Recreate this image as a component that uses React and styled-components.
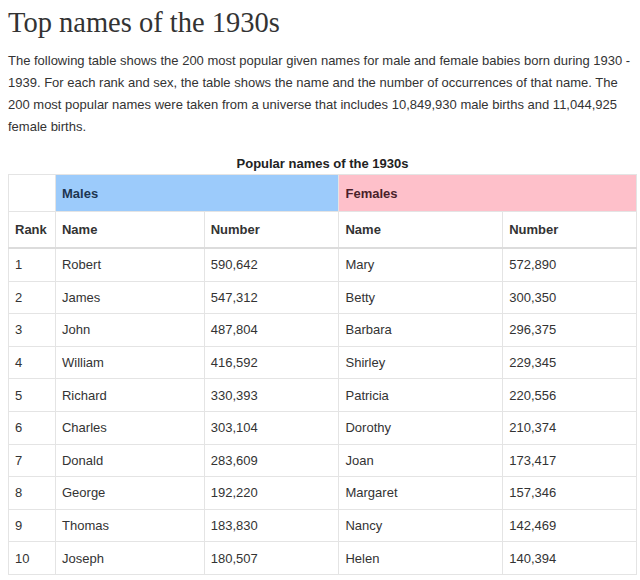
import React from 'react';
import styled, { createGlobalStyle } from 'styled-components';

const GlobalStyle = createGlobalStyle`
  body {
    margin: 0;
    padding: 0 8px;
    background: #fff;
    color: #333;
    font-family: "Liberation Sans", Arial, sans-serif;
  }
`;

const Page = styled.div`
  width: 632px;
`;

const Title = styled.h1`
  margin: 0;
  padding-top: 6px;
  font-family: "Liberation Serif", "Times New Roman", serif;
  font-weight: normal;
  font-size: 28.5px;
  line-height: 34px;
  color: #333;
`;

const Intro = styled.p`
  margin: 10px 0 0;
  font-size: 13px;
  line-height: 22px;
  color: #333;
`;

const Table = styled.table`
  margin-top: 16px;
  width: 629px;
  border-collapse: collapse;
  font-size: 13px;
  color: #333;
`;

const Caption = styled.caption`
  font-weight: bold;
  font-size: 13px;
  line-height: 20px;
  padding-bottom: 0;
  color: #222;
`;

const GroupCell = styled.th`
  height: 36px;
  padding: 0 6px;
  text-align: left;
  font-weight: bold;
  border: 1px solid #e4e4e4;
  background: ${p => (p.$tone === 'male' ? '#9ccbfb' : p.$tone === 'female' ? '#fec0ca' : '#fff')};
  color: ${p => (p.$tone === 'male' ? '#1c3550' : '#4a1f2a')};
`;

const HeadCell = styled.th`
  height: 35px;
  padding: 0 6px;
  text-align: left;
  font-weight: bold;
  border: 1px solid #e4e4e4;
  border-bottom: 2px solid #dcdcdc;
  color: #333;
`;

const Cell = styled.td`
  height: 31.6px;
  padding: 0 6px;
  border: 1px solid #e4e4e4;
  color: #333;
`;

const rows = [
  ['Robert', '590,642', 'Mary', '572,890'],
  ['James', '547,312', 'Betty', '300,350'],
  ['John', '487,804', 'Barbara', '296,375'],
  ['William', '416,592', 'Shirley', '229,345'],
  ['Richard', '330,393', 'Patricia', '220,556'],
  ['Charles', '303,104', 'Dorothy', '210,374'],
  ['Donald', '283,609', 'Joan', '173,417'],
  ['George', '192,220', 'Margaret', '157,346'],
  ['Thomas', '183,830', 'Nancy', '142,469'],
  ['Joseph', '180,507', 'Helen', '140,394'],
];

export default function App() {
  return (
    <Page>
      <GlobalStyle />
      <Title>Top names of the 1930s</Title>
      <Intro>
        The following table shows the 200 most popular given names for male and female babies born during 1930 -
        1939. For each rank and sex, the table shows the name and the number of occurrences of that name. The
        200 most popular names were taken from a universe that includes 10,849,930 male births and 11,044,925
        female births.
      </Intro>
      <Table>
        <Caption>Popular names of the 1930s</Caption>
        <colgroup>
          <col style={{ width: 47 }} />
          <col style={{ width: 149 }} />
          <col style={{ width: 135 }} />
          <col style={{ width: 164 }} />
          <col style={{ width: 134 }} />
        </colgroup>
        <thead>
          <tr>
            <GroupCell />
            <GroupCell colSpan={2} $tone="male">Males</GroupCell>
            <GroupCell colSpan={2} $tone="female">Females</GroupCell>
          </tr>
          <tr>
            <HeadCell>Rank</HeadCell>
            <HeadCell>Name</HeadCell>
            <HeadCell>Number</HeadCell>
            <HeadCell>Name</HeadCell>
            <HeadCell>Number</HeadCell>
          </tr>
        </thead>
        <tbody>
          {rows.map((r, i) => (
            <tr key={i}>
              <Cell>{i + 1}</Cell>
              {r.map((v, j) => (
                <Cell key={j}>{v}</Cell>
              ))}
            </tr>
          ))}
        </tbody>
      </Table>
    </Page>
  );
}
